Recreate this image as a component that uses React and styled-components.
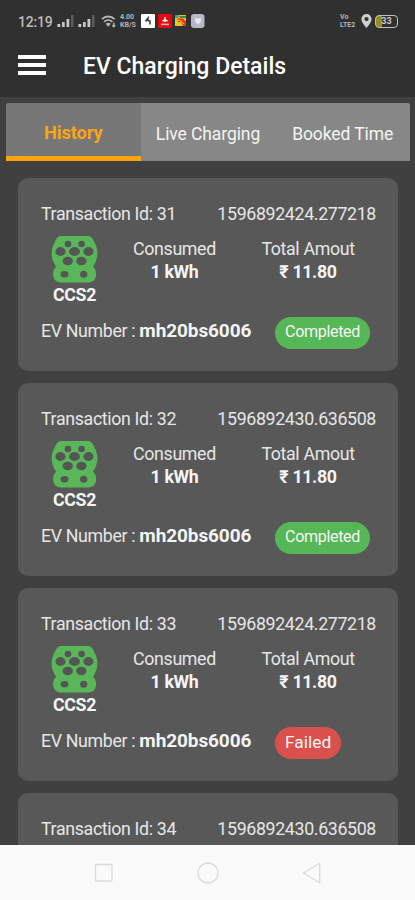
import React, { useState } from "react";
import styled, { createGlobalStyle } from "styled-components";

const transactions = [
  { id: 31, time: "1596892424.277218", status: "Completed" },
  { id: 32, time: "1596892430.636508", status: "Completed" },
  { id: 33, time: "1596892424.277218", status: "Failed" },
  { id: 34, time: "1596892430.636508", status: "Completed" },
];

const tabs = ["History", "Live Charging", "Booked Time"];

function Signal() {
  return (
    <svg width="18" height="12" viewBox="0 0 18 12">
      <rect x="0.5" y="9" width="2.7" height="3" fill="#d0d0d0" />
      <rect x="5" y="7" width="2.7" height="5" fill="#c4c4c4" />
      <rect x="9.5" y="4" width="2.8" height="8" fill="#c8c8c8" />
      <rect x="14" y="0" width="2.5" height="12" fill="#5c5c5c" />
    </svg>
  );
}

function Wifi() {
  return (
    <svg width="16" height="13" viewBox="0 0 16 13" fill="none" stroke="#b8b8b8">
      <path d="M1 4.2C4.5.6 10 .6 13.6 4.2" strokeWidth="1.8" />
      <path d="M3.2 6.8c2.4-2.4 5.8-2.4 8.2 0" strokeWidth="1.7" />
      <path d="M4.8 8.8c1.5-1.5 3.5-1.5 5 0L7.3 11.8z" fill="#b8b8b8" stroke="none" />
      <path d="M12.8 7.6v4M11.4 10.2l1.4 1.5 1.4-1.5" strokeWidth="1.3" />
    </svg>
  );
}

function Pin() {
  return (
    <svg width="11" height="14" viewBox="0 0 11 14">
      <path
        fill="#cfcfcf"
        fillRule="evenodd"
        d="M5.5 0A5.1 5.1 0 0 0 .4 5.1C.4 8.7 5.5 14 5.5 14s5.1-5.3 5.1-8.9A5.1 5.1 0 0 0 5.5 0zm0 3a2.1 2.1 0 1 1 0 4.2 2.1 2.1 0 0 1 0-4.2z"
      />
    </svg>
  );
}

function Connector() {
  return (
    <svg width="47" height="47" viewBox="0 0 47 47">
      <path
        fill="#59b75a"
        d="M10 0h27c3 0 4.400 2.400 6 5.400 4.900 8.500 4.500 17.200-1 25.400 5.200 4 4 15.600-3.800 15.600H9C1.200 46.400 0 34.800 5.200 30.800-.6 22.600-.8 13.900 4.100 5.400 5.600 2.400 7 0 10 0z"
      />
      <g fill="#555">
        <ellipse cx="17" cy="8" rx="3.300" ry="3.200" />
        <ellipse cx="30.600" cy="8" rx="3.300" ry="3.200" />
        <ellipse cx="9.500" cy="15.500" rx="5.100" ry="4.400" />
        <ellipse cx="23.500" cy="15.500" rx="5.500" ry="4.400" />
        <ellipse cx="37.500" cy="15.500" rx="5.100" ry="4.400" />
        <ellipse cx="16.700" cy="25" rx="5.200" ry="4.200" />
        <ellipse cx="30.400" cy="25" rx="5.200" ry="4.200" />
        <ellipse cx="13.500" cy="38.300" rx="3.900" ry="3.300" />
        <ellipse cx="32.700" cy="38.300" rx="3.600" ry="3.500" />
      </g>
    </svg>
  );
}

function StatusBar() {
  return (
    <Status>
      <Clock>12:19</Clock>
      <Signals>
        <Signal />
        <Signal />
      </Signals>
      <Wifi />
      <TinyLabel>
        <span>4.00</span>
        <span>KB/S</span>
      </TinyLabel>
      <AppIcons>
        <svg width="14" height="14" viewBox="0 0 14 14">
          <rect width="14" height="14" rx="1" fill="#fff" />
          <path d="M4.500 7.500 7 4v3M7 6.500l2 .5v3.500" fill="none" stroke="#333" strokeWidth="1.500" />
        </svg>
        <svg width="14" height="14" viewBox="0 0 14 14">
          <rect width="14" height="14" rx="1" fill="#e30b10" />
          <path d="M7 3v5M4.500 7.200 7 5.500l2.500 1.700" fill="none" stroke="#fff" strokeWidth="1.400" />
          <path d="M3 10.400h8" stroke="#f8b5b5" strokeWidth="1.600" />
        </svg>
        <svg width="14" height="14" viewBox="0 0 14 14">
          <rect x="1" y="1" width="11" height="11" fill="#eec51f" />
          <path d="M1 1h4l-1 3H1z" fill="#35a0a0" />
          <path d="M5 2h7v2H6z" fill="#557f2c" />
          <path d="M3 4.500h6l3 3V12H9L7 8H4z" fill="#df3a20" />
          <path d="m3 6 3 .5L10 10" stroke="#f4dc35" fill="none" />
        </svg>
        <svg width="14" height="14" viewBox="0 0 14 14">
          <rect width="13.500" height="14" rx="3" fill="#b5b8c8" />
          <path d="M4 4.300h6v3.400L7 10.500 4 7.700z" fill="#e6e7ee" />
        </svg>
      </AppIcons>
      <StatusRight>
        <TinyLabel>
          <span>Vo</span>
          <span>LTE2</span>
        </TinyLabel>
        <Pin />
        <Battery>33</Battery>
      </StatusRight>
    </Status>
  );
}

function TransactionCard({ id, time, status }) {
  return (
    <Card>
      <CardTop>
        <span>Transaction Id: {id}</span>
        <span>{time}</span>
      </CardTop>
      <CardMiddle>
        <Plug>
          <Connector />
          <strong>CCS2</strong>
        </Plug>
        <Stat>
          <span>Consumed</span>
          <strong>1 kWh</strong>
        </Stat>
        <Stat>
          <span>Total Amout</span>
          <strong>₹ 11.80</strong>
        </Stat>
      </CardMiddle>
      <CardBottom>
        <EvNumber>
          EV Number : <strong>mh20bs6006</strong>
        </EvNumber>
        <Badge $failed={status === "Failed"}>{status}</Badge>
      </CardBottom>
    </Card>
  );
}

function App() {
  const [active, setActive] = useState("History");

  return (
    <>
      <GlobalStyle />
      <Screen>
        <Header>
          <StatusBar />
          <TitleBar>
            <MenuButton aria-label="Menu">
              <i />
              <i />
              <i />
            </MenuButton>
            <Title>EV Charging Details</Title>
          </TitleBar>
        </Header>
        <Tabs>
          {tabs.map((tab) => (
            <Tab key={tab} $active={tab === active} onClick={() => setActive(tab)}>
              {tab}
            </Tab>
          ))}
        </Tabs>
        <List>
          {transactions.map((item) => (
            <TransactionCard key={item.id} {...item} />
          ))}
        </List>
        <NavBar>
          <svg width="20" height="20" viewBox="0 0 20 20">
            <rect x="1.500" y="1.500" width="16.500" height="16.500" rx="1" />
          </svg>
          <svg width="22" height="22" viewBox="0 0 22 22">
            <circle cx="11" cy="11" r="10" />
          </svg>
          <svg width="20" height="22" viewBox="0 0 20 22">
            <path d="M17.700 1.300v19.400L1.500 11z" strokeLinejoin="round" />
          </svg>
        </NavBar>
      </Screen>
    </>
  );
}

const GlobalStyle = createGlobalStyle`
  * {
    box-sizing: border-box;
  }
  body {
    margin: 0;
    overflow: hidden;
    font-family: Roboto, "Noto Sans", sans-serif;
  }
  svg {
    display: block;
    flex-shrink: 0;
  }
`;

const Screen = styled.div`
  display: flex;
  flex-direction: column;
  width: 415px;
  height: 900px;
  overflow: hidden;
  background: #404040;
  color: #e6e6e6;
`;

const Header = styled.header`
  flex: 0 0 97px;
  background: #303030;
`;

const Status = styled.div`
  display: flex;
  align-items: center;
  height: 42px;
  padding: 0 17px 0 18px;
`;

const Clock = styled.span`
  width: 39px;
  padding-top: 1px;
  font-size: 14px;
  font-weight: 500;
  letter-spacing: -0.2px;
  color: #bcbcbc;
`;

const Signals = styled.div`
  display: flex;
  gap: 3px;
  margin-right: 5px;
`;

const TinyLabel = styled.div`
  display: flex;
  flex-direction: column;
  width: 17px;
  margin-left: 3px;
  font-size: 7px;
  font-weight: 700;
  line-height: 8px;
  color: #b4b4b4;
`;

const AppIcons = styled.div`
  display: flex;
  gap: 2.7px;
  margin-left: 4px;
`;

const StatusRight = styled.div`
  display: flex;
  align-items: center;
  gap: 3.5px;
  margin-left: auto;
`;

const Battery = styled.div`
  width: 23px;
  height: 13px;
  border: 1.5px solid #c0c0c0;
  border-radius: 4px;
  background: linear-gradient(90deg, #909018 0 6px, transparent 6px);
  font-size: 9px;
  font-weight: 700;
  line-height: 11px;
  text-align: center;
  color: #c8c8c8;
`;

const TitleBar = styled.div`
  display: flex;
  align-items: center;
  height: 48px;
  padding-left: 18px;
`;

const MenuButton = styled.button`
  display: flex;
  flex-direction: column;
  gap: 4px;
  width: 28px;
  margin-top: -2px;
  padding: 0;
  border: 0;
  background: none;

  i {
    width: 28px;
    height: 4px;
    background: #fff;
  }
`;

const Title = styled.h1`
  margin: 2px 0 0 37px;
  font-size: 23px;
  font-weight: 500;
  line-height: 28px;
  white-space: nowrap;
  color: #fff;
`;

const Tabs = styled.nav`
  display: grid;
  grid-template-columns: repeat(3, 1fr);
  flex: 0 0 58px;
  margin: 6px 5px 0 6px;
  border-radius: 3px 3px 0 0;
  overflow: hidden;
  background: #878787;
`;

const Tab = styled.button`
  padding: ${({ $active }) => ($active ? "6px 0 0" : "3px 0 0")};
  border: 0;
  border-bottom: ${({ $active }) => ($active ? "5px solid #fca510" : "0 solid")};
  background: ${({ $active }) => ($active ? "#777" : "#878787")};
  font-family: inherit;
  font-size: ${({ $active }) => ($active ? "18.2px" : "17.5px")};
  font-weight: ${({ $active }) => ($active ? 700 : 400)};
  letter-spacing: -0.1px;
  white-space: nowrap;
  color: ${({ $active }) => ($active ? "#fca510" : "#f4f4f4")};
`;

const List = styled.main`
  display: flex;
  flex: 1 1 0;
  flex-direction: column;
  gap: 12px;
  min-height: 0;
  padding: 17px 17px 0 18px;
  overflow-y: auto;
  scrollbar-width: none;
`;

const Card = styled.article`
  flex: 0 0 193px;
  padding: 26px 22px 0 23px;
  border-radius: 10px;
  background: #585858;
  font-size: 17.8px;
  letter-spacing: -0.35px;
  line-height: 20px;

  strong {
    font-weight: 700;
    color: #f4f4f4;
  }
`;

const CardTop = styled.div`
  display: flex;
  justify-content: space-between;
  white-space: nowrap;
`;

const CardMiddle = styled.div`
  display: grid;
  grid-template-columns: 67px 133px 134px;
  height: 71px;
  margin-top: 12px;
`;

const Plug = styled.div`
  display: flex;
  flex-direction: column;
  align-items: center;
  gap: 2px;
`;

const Stat = styled.div`
  display: flex;
  flex-direction: column;
  align-items: center;
  gap: 3px;
  padding-top: 3px;
  white-space: nowrap;
`;

const CardBottom = styled.div`
  display: flex;
  align-items: flex-start;
  margin-top: 10px;
`;

const EvNumber = styled.div`
  width: 234px;
  padding-top: 4px;
  white-space: nowrap;

  strong {
    font-size: 19px;
    letter-spacing: -0.1px;
  }
`;

const Badge = styled.span`
  height: 32px;
  padding: 0 10px;
  border-radius: 16px;
  background: ${({ $failed }) => ($failed ? "#d9504c" : "#56b756")};
  font-size: ${({ $failed }) => ($failed ? "17.4px" : "16.1px")};
  letter-spacing: ${({ $failed }) => ($failed ? "0" : "-0.35px")};
  line-height: 30px;
  color: #f6f6f6;
`;

const NavBar = styled.footer`
  display: flex;
  flex: 0 0 55px;
  align-items: center;
  justify-content: center;
  gap: 83px;
  background: #fafafa;

  svg {
    fill: none;
    stroke: #dadada;
    stroke-width: 1.3;
  }
`;

export default App;
